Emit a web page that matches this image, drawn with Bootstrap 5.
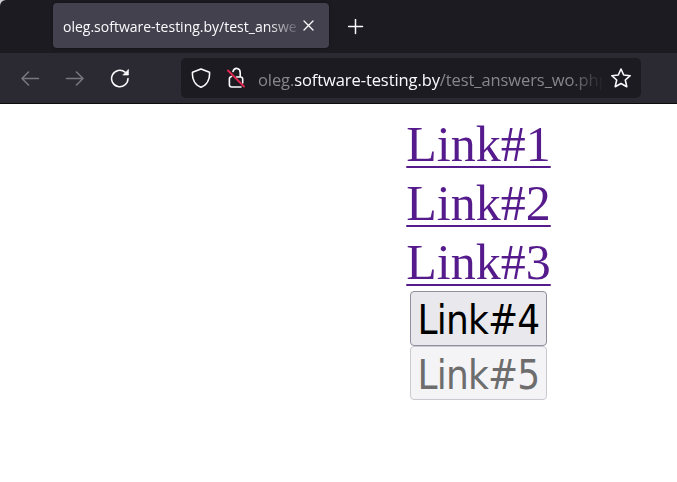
<!DOCTYPE html>
<html lang="en">
<head>
<meta charset="utf-8">
<title>Links</title>
<link href="https://cdn.jsdelivr.net/npm/bootstrap@5.3.0/dist/css/bootstrap.min.css" rel="stylesheet">
<style>
body{width:677px;height:482px;font-family:"Open Sans","Noto Sans",sans-serif}
.tabstrip{height:53px;background:#1c1b22;padding:3px 0 5px 53px;border-top-left-radius:6px}
.corner{background:#c9cccf}
.browser-tab{width:276px;height:45px;background:#42414d;border-radius:4px;padding:0 14px 0 10px;color:#fbfbfe;box-shadow:0 0 3px rgba(0,0,0,.5)}
.tab-title{width:237px;font-size:14px;letter-spacing:0;line-height:20px;padding-top:2px;-webkit-mask-image:linear-gradient(to right,#000 205px,transparent 239px)}
.plus-icon{margin-left:19px;margin-top:2px}
.toolbar{height:51px;background:#2b2a33;border-bottom:1px solid #0c0c0d;padding:5px 0 6px 20px}
.toolbar svg,.tabstrip svg{fill:none;stroke:#fbfbfe;stroke-width:1.6;stroke-linecap:round;stroke-linejoin:round;flex:none;display:block}
.toolbar .dim{stroke:#78777e}
.addr{width:460px;height:40px;background:#1c1b22;border-radius:5px;margin-left:51px;padding:0 10px}
.addr-text{width:345px;margin-left:11px;font-size:16.5px;letter-spacing:-.09px;line-height:24px;color:#87868b;padding-top:4px;-webkit-mask-image:linear-gradient(to right,#000 312px,transparent 346px)}
.addr-text span{color:#fbfbfe}
.links{padding:11px 0 0 280px}
.links a{font:50px/59px "Liberation Serif",serif;color:#551a8b;text-decoration:underline;text-decoration-thickness:2px;text-underline-offset:5px;text-decoration-skip-ink:none;height:59px}
.links .btn{width:137px;height:55px;padding:0;border:1px solid #8f8f9d;border-radius:4px;background:#e9e9ed;color:#000;font:40px/57px "DejaVu Sans Condensed","DejaVu Sans",sans-serif;font-stretch:condensed;letter-spacing:-.8px;white-space:nowrap}
.links a + .btn{margin-top:-1px}
.links .btn:disabled{opacity:1;height:54px;border-color:#c9c9d1;background:#f4f4f6;color:#6d6d6d;line-height:56px}
</style>
<script src="https://cdn.jsdelivr.net/npm/bootstrap@5.3.0/dist/js/bootstrap.bundle.min.js"></script>
</head>
<body class="bg-white overflow-hidden">
<header>
<div class="corner"><div class="tabstrip d-flex align-items-center">
<div class="browser-tab d-flex align-items-center justify-content-between">
<div class="tab-title text-nowrap overflow-hidden">oleg.software-testing.by/test_answe</div>
<svg width="12" height="12" viewBox="0 0 12 12"><path stroke-width="1.3" d="M1 1l9 9m0-9l-9 9"/></svg>
</div>
<svg class="plus-icon" width="16" height="16" viewBox="0 0 16 16"><path stroke-width="1.5" d="M7.500 .5v14M.5 7.500h14"/></svg>
</div></div>
<div class="toolbar d-flex align-items-center">
<svg class="dim" width="20" height="20" viewBox="0 0 20 20"><path d="M18.500 10.500H2m6.500-6.500L2 10.500 8.500 17"/></svg>
<svg class="dim ms-4" width="20" height="20" viewBox="0 0 20 20"><path d="M2.500 10.500H19M12.500 4l6.500 6.500-6.500 6.500"/></svg>
<svg class="ms-4" width="22" height="20" viewBox="0 0 22 20"><path stroke-width="1.5" d="M20 10.500a8.200 8.200 0 1 1-3-6.300"/><path d="M20.400 1.800v5.200h-5.200z" fill="#fbfbfe" stroke-width=".7"/></svg>
<div class="addr d-flex align-items-center">
<svg width="20" height="20" viewBox="0 0 20 20"><path stroke-width="1.6" d="M10 1L18.500 4.300C19 10.500 16.500 16.800 10 19.300 3.500 16.800 1 10.500 1.500 4.300z"/></svg>
<svg width="20" height="22" viewBox="0 0 20 22" class="ms-3"><path stroke-width="1.6" d="M6 4.500C7.500-.3 13.200.8 13.200 5.500v4M4.500 9.500C3 9.800 2.400 10.500 2.400 12v5.800c0 1.500.7 2.200 2.200 2.200H14M9.500 10h4c1.500 0 2.200.7 2.200 2.200V16"/><path stroke="#e22850" stroke-width="1.8" d="M1 3.500L17 19.500"/></svg>
<div class="addr-text text-nowrap overflow-hidden">oleg.<span>software-testing.by</span>/test_answers_wo.php</div>
<svg width="20" height="20" viewBox="0 0 20 20" class="ms-auto"><path stroke-width="1.6" d="M10 1l2.700 6 6.500.7-4.900 4.300 1.500 6.700L10 15.500l-5.800 3.200L5.700 12 .8 7.700 7.300 7z"/></svg>
</div>
</div>
</header>
<main class="links d-flex flex-column align-items-center">
<a href="#">Link#1</a>
<a href="#">Link#2</a>
<a href="#">Link#3</a>
<button class="btn" type="button">Link#4</button>
<button class="btn" type="button" disabled>Link#5</button>
</main>
</body>
</html>
